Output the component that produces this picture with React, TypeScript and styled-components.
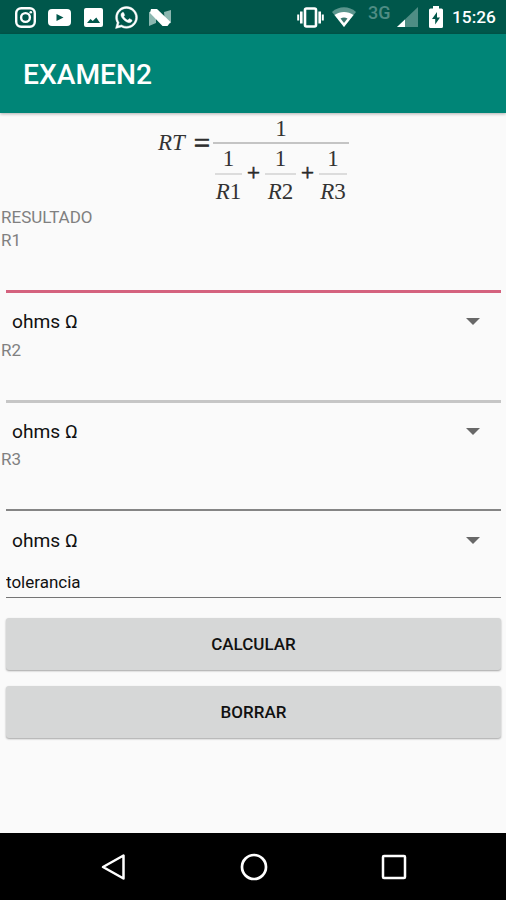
import React, { useState } from 'react';
import styled, { createGlobalStyle } from 'styled-components';
import { FaWhatsapp } from 'react-icons/fa';

const GlobalStyle = createGlobalStyle`
  * {
    box-sizing: border-box;
  }
  body {
    margin: 0;
    background: #fafafa;
    font-family: Roboto, sans-serif;
  }
`;

const Screen = styled.div`
  width: 506px;
  height: 900px;
  display: flex;
  flex-direction: column;
  background: #fafafa;
  overflow: hidden;
`;

const StatusBar = styled.div`
  height: 34px;
  flex: none;
  display: flex;
  justify-content: space-between;
  padding: 0 11px 0 15px;
  background: #00574b;
  color: #fff;
`;

const StatusGroup = styled.div`
  display: flex;
  align-items: center;
  height: 34px;
`;

const StatusIcon = styled.span<{ $gap?: number }>`
  display: flex;
  margin-right: ${(props) => props.$gap ?? 0}px;
`;

const WhatsappIcon = styled(FaWhatsapp)`
  stroke: #fff;
  stroke-width: 10px;
`;

const Network = styled.span`
  width: 23px;
  margin-right: 6px;
  padding-bottom: 8px;
  font-size: 18px;
  font-weight: 500;
  line-height: 18px;
  color: #4f8d84;
`;

const Clock = styled.span`
  width: 43px;
  font-size: 17.3px;
  font-weight: 500;
  line-height: 34px;
  white-space: nowrap;
`;

const AppBar = styled.header`
  height: 79px;
  flex: none;
  display: flex;
  align-items: center;
  padding: 3px 23px 0;
  background: #008577;
  box-shadow: 0 1px 3px rgba(0, 0, 0, 0.3);
`;

const Title = styled.h1`
  margin: 0;
  font-size: 28.2px;
  font-weight: 500;
  line-height: 34px;
  color: #fff;
`;

const Content = styled.main`
  flex: 1;
  display: flex;
  flex-direction: column;
`;

const Formula = styled.div`
  height: 93px;
  display: flex;
  padding: 3px 0 0 158px;
  font-family: 'Liberation Serif', serif;
  font-size: 23px;
  line-height: 26px;
  color: #333;
`;

const FormulaLeft = styled.div`
  display: flex;
  width: 55px;
  padding-top: 14px;
`;

const Variable = styled.span`
  font-style: italic;
`;

const Equals = styled.span`
  margin-left: 9px;
  font-size: 29px;
  -webkit-text-stroke: 0.6px #222;
`;

const Fraction = styled.div`
  width: 136px;
`;

const Numerator = styled.div`
  height: 28px;
  border-bottom: 2px solid #c4c4c4;
  text-align: center;
`;

const Denominator = styled.div`
  display: flex;
  padding: 2px 0 0 2px;
`;

const Term = styled.div<{ $width: number }>`
  width: ${(props) => props.$width}px;
  text-align: center;
`;

const TermTop = styled.div`
  height: 29px;
  border-bottom: 2px solid #dcdcdc;
`;

const TermBottom = styled.div`
  padding-top: 4px;
  white-space: nowrap;
`;

const Plus = styled.span`
  width: 23px;
  padding-top: 14px;
  text-align: center;
  -webkit-text-stroke: 0.6px #222;
`;

const Label = styled.div`
  height: 23px;
  padding-left: 1px;
  font-size: 17px;
  line-height: 23px;
  color: #808080;
`;

const Field = styled.div`
  height: 109.7px;
`;

const LineInput = styled.input<{ $color: string; $thick: number }>`
  display: block;
  width: 495px;
  height: ${(props) => 38 + props.$thick}px;
  margin: 0 0 ${(props) => 6 - props.$thick}px 6px;
  padding: 0;
  border: none;
  border-bottom: ${(props) => props.$thick}px solid ${(props) => props.$color};
  outline: none;
  background: transparent;
  font: 17px Roboto, sans-serif;
  color: #111;
`;

const Spinner = styled.div`
  height: 42px;
  display: flex;
  align-items: center;
  justify-content: space-between;
  padding: 10px 26px 0 12px;
  font-size: 19.2px;
  line-height: 24px;
  color: #111;
`;

const Arrow = styled.span`
  margin-bottom: 1px;
  border: 7px solid transparent;
  border-top-color: #686868;
  border-bottom: none;
`;

const Tolerance = styled.input`
  width: 495px;
  height: 30px;
  flex: none;
  margin: 10px 0 20px 6px;
  padding: 0 0 1px;
  border: none;
  border-bottom: 1.5px solid #757575;
  outline: none;
  background: transparent;
  font: 17px Roboto, sans-serif;
  color: #111;
`;

const Button = styled.button`
  width: 495px;
  height: 52px;
  flex: none;
  margin: 0 0 16px 6px;
  padding: 0;
  border: none;
  border-radius: 3px;
  background: #d6d7d7;
  box-shadow: 0 1px 2px rgba(0, 0, 0, 0.35);
  font: 500 17px Roboto, sans-serif;
  color: #111;
`;

const NavBar = styled.nav`
  height: 67px;
  flex: none;
  display: flex;
  align-items: center;
  justify-content: space-between;
  padding: 0 99px 0 100px;
  background: #000;
`;

const InstagramIcon = () => (
  <svg width="21" height="21" viewBox="0 0 21 21" fill="none" stroke="#fff" strokeWidth="2.4">
    <rect x="1.2" y="1.2" width="18.6" height="18.6" rx="5" />
    <circle cx="10.5" cy="10.5" r="4.4" />
    <circle cx="15.8" cy="5.2" r="1.3" fill="#fff" stroke="none" />
  </svg>
);

const YoutubeIcon = () => (
  <svg width="23" height="17" viewBox="0 0 23 17">
    <rect width="23" height="17" rx="4" fill="#fff" />
    <path d="M8.5 5l7 3.5-7 3.5z" fill="#00574b" />
  </svg>
);

const ImageIcon = () => (
  <svg width="19" height="19" viewBox="0 0 19 19">
    <rect width="19" height="19" rx="2" fill="#fff" />
    <path d="M3 15l3.500-4 2.300 2 3.500-3.500L16 15z" fill="#00574b" />
  </svg>
);

const NougatIcon = () => (
  <svg width="22" height="17" viewBox="0 0 22 17">
    <path d="M0 3l7-1v12l-7 3zM15 3l7-2v13l-6 1z" fill="#8bb7b0" />
    <path d="M2 0h6l13.500 13-3 4h-5L1 4z" fill="#fff" />
  </svg>
);

const VibrateIcon = () => (
  <svg width="27" height="21" viewBox="0 0 27 21" fill="none" stroke="#fff">
    <rect x="8" y="1.5" width="11" height="18" rx="1.5" strokeWidth="2.6" />
    <path d="M4.3 4.5v12M22.7 4.5v12" strokeWidth="2.6" />
    <path d="M1.2 7.5v6M25.8 7.5v6" strokeWidth="2" />
  </svg>
);

const WifiIcon = () => (
  <svg width="24" height="20" viewBox="0 0 24 20">
    <path d="M0 5C7-1.2 17-1.2 24 5L12 20z" fill="#5b958d" />
    <path d="M2.500 8C8 4 16 4 21.500 8L12 20z" fill="#fff" />
    <path d="M8.500 11.500q3.500-2 7 0L12 16z" fill="#39776e" />
  </svg>
);

const SignalIcon = () => (
  <svg width="21" height="20" viewBox="0 0 21 20">
    <path d="M21 0v20H0z" fill="#4f8d84" />
    <path d="M8 12.4V20H0z" fill="#fff" />
  </svg>
);

const BatteryIcon = () => (
  <svg width="14" height="22" viewBox="0 0 14 22">
    <path d="M4 0h6v2.5h2.5q1.5 0 1.5 1.5v16.5q0 1.5-1.5 1.5h-11Q0 22 0 20.5V4q0-1.5 1.500-1.500H4z" fill="#fff" />
    <path d="M8 6l-5 7h3.200v5.500L11 11.500H8z" fill="#00574b" />
  </svg>
);

const terms = [
  { digit: 1, width: 27 },
  { digit: 2, width: 31 },
  { digit: 3, width: 28 },
];

const fields = [
  { name: 'R1', color: '#d4627e', thick: 3 },
  { name: 'R2', color: '#c6c6c6', thick: 3 },
  { name: 'R3', color: '#858585', thick: 2 },
];

export default function App() {
  const [values, setValues] = useState<Record<string, string>>({});
  const [tolerance, setTolerance] = useState('tolerancia');

  return (
    <Screen>
      <GlobalStyle />
      <StatusBar>
        <StatusGroup>
          <StatusIcon $gap={12}><InstagramIcon /></StatusIcon>
          <StatusIcon $gap={13}><YoutubeIcon /></StatusIcon>
          <StatusIcon $gap={11}><ImageIcon /></StatusIcon>
          <StatusIcon $gap={10}><WhatsappIcon size={25} /></StatusIcon>
          <StatusIcon><NougatIcon /></StatusIcon>
        </StatusGroup>
        <StatusGroup>
          <StatusIcon $gap={8}><VibrateIcon /></StatusIcon>
          <StatusIcon $gap={12}><WifiIcon /></StatusIcon>
          <Network>3G</Network>
          <StatusIcon $gap={11}><SignalIcon /></StatusIcon>
          <StatusIcon $gap={9}><BatteryIcon /></StatusIcon>
          <Clock>15:26</Clock>
        </StatusGroup>
      </StatusBar>
      <AppBar>
        <Title>EXAMEN2</Title>
      </AppBar>
      <Content>
        <Formula>
          <FormulaLeft>
            <Variable>RT</Variable>
            <Equals>=</Equals>
          </FormulaLeft>
          <Fraction>
            <Numerator>1</Numerator>
            <Denominator>
              {terms.map((term, i) => (
                <React.Fragment key={term.digit}>
                  {i > 0 && <Plus>+</Plus>}
                  <Term $width={term.width}>
                    <TermTop>1</TermTop>
                    <TermBottom>
                      <Variable>R</Variable>
                      {term.digit}
                    </TermBottom>
                  </Term>
                </React.Fragment>
              ))}
            </Denominator>
          </Fraction>
        </Formula>
        <Label>RESULTADO</Label>
        {fields.map((field) => (
          <Field key={field.name}>
            <Label>{field.name}</Label>
            <LineInput
              $color={field.color}
              $thick={field.thick}
              value={values[field.name] ?? ''}
              onChange={e => setValues({ ...values, [field.name]: e.target.value })}
            />
            <Spinner>
              ohms Ω
              <Arrow />
            </Spinner>
          </Field>
        ))}
        <Tolerance value={tolerance} onChange={e => setTolerance(e.target.value)} />
        <Button>CALCULAR</Button>
        <Button onClick={() => setValues({})}>BORRAR</Button>
      </Content>
      <NavBar>
        <svg width="26" height="28" viewBox="0 0 26 28" fill="none" stroke="#fff" strokeWidth="2.5">
          <path d="M23.5 2.5v23L3 14z" strokeLinejoin="round" />
        </svg>
        <svg width="28" height="28" viewBox="0 0 28 28" fill="none" stroke="#fff" strokeWidth="2.7">
          <circle cx="14" cy="14" r="12" />
        </svg>
        <svg width="26" height="26" viewBox="0 0 26 26" fill="none" stroke="#fff" strokeWidth="2.5">
          <rect x="2" y="2" width="22" height="22" rx="1" />
        </svg>
      </NavBar>
    </Screen>
  );
}
